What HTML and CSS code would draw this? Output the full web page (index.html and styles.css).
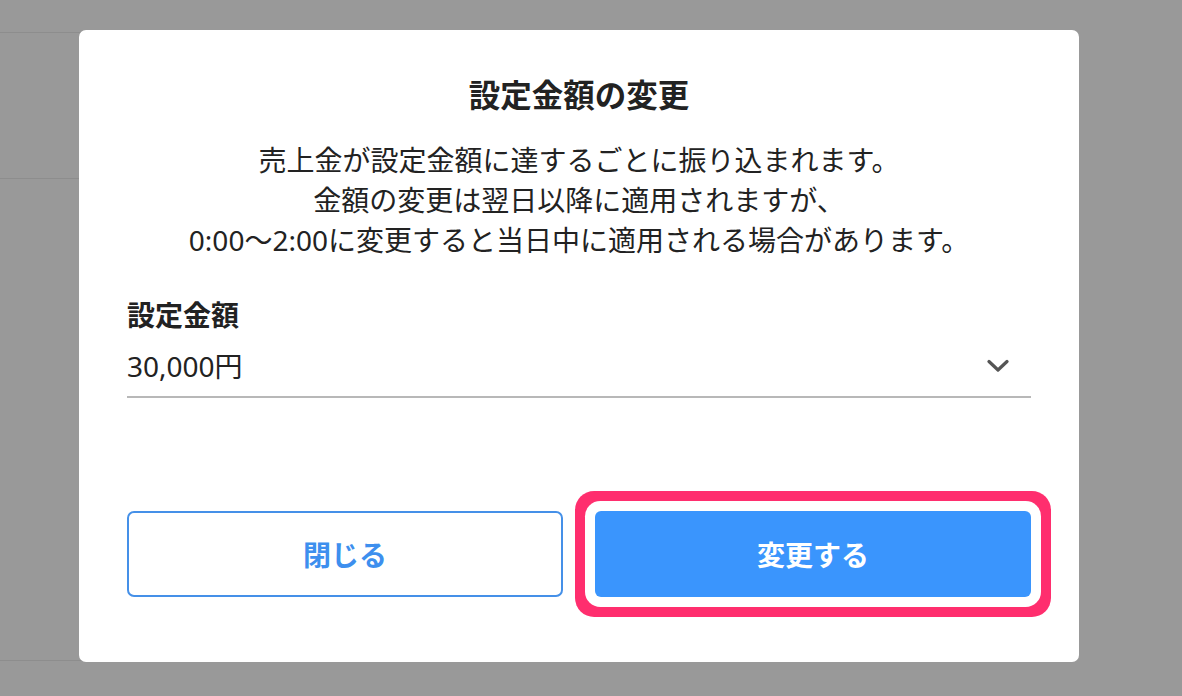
FILE: index.html
```html
<!DOCTYPE html>
<html lang="ja">
<head>
    <meta charset="UTF-8">
    <meta name="viewport" content="width=device-width, initial-scale=1.0">
    <title>設定金額の変更</title>
    <link rel="stylesheet" href="styles.css">
</head>
<body>
    <!-- Page behind the dialog -->
    <div class="backdropPage">
        <div class="pageRow rowHead"></div>
        <div class="pageRow rowMid"></div>
        <div class="pageRow rowLast"></div>
    </div>

    <!-- Dialog -->
    <div class="overlay">
        <div class="modal">
            <h2 class="modalTitle">設定金額の変更</h2>
            <p class="modalText">
                売上金が設定金額に達するごとに振り込まれます。<br>
                金額の変更は翌日以降に適用されますが、<br>
                0:00〜2:00に変更すると当日中に適用される場合があります。
            </p>

            <div class="fieldLabel">設定金額</div>
            <div class="selectBox">
                <span class="selectValue">30,000円</span>
                <svg class="chevron" width="22" height="14" viewBox="0 0 22 14">
                    <path d="M2 2.5 L11 11 L20 2.5" fill="none" stroke="#555" stroke-width="3.2" stroke-linecap="round" stroke-linejoin="round"/>
                </svg>
            </div>

            <div class="buttonRow">
                <button class="btn btnOutline">閉じる</button>
                <button class="btn btnPrimary">変更する</button>
            </div>
        </div>
    </div>
</body>
</html>
```

FILE: styles.css
```css
body {
    margin: 0;
    background-color: #999999;
    font-family: "Noto Sans", "Noto Sans CJK JP", sans-serif;
    color: #222;
    height: 696px;
    overflow: hidden;
}

/* background page rows */
.backdropPage {
    width: 600px;
}

.pageRow {
    border-bottom: 1px solid #8d8d8d;
}

.rowHead {
    height: 32px;
}

.rowMid {
    height: 145px;
}

.rowLast {
    height: 481px;
}

.overlay {
    position: absolute;
    top: 0;
    left: 0;
    right: 0;
    bottom: 0;
}

.modal {
    box-sizing: border-box;
    width: 1000px;
    height: 632px;
    margin: 30px 0 0 79px;
    padding: 0 48px;
    background-color: #fff;
    border-radius: 7px;
}

.modalTitle {
    margin: 0;
    padding-top: 41px;
    font-size: 31.5px;
    line-height: 48px;
    font-weight: 700;
    text-align: center;
    color: #222;
}

.modalText {
    margin: 21px 0 0;
    font-size: 28px;
    line-height: 40px;
    text-align: center;
    color: #222;
}

.fieldLabel {
    margin-top: 35px;
    font-size: 28px;
    line-height: 40px;
    font-weight: 700;
    color: #222;
}

.selectBox {
    display: flex;
    align-items: center;
    justify-content: space-between;
    padding: 11px 22px 10px 0;
    border-bottom: 2px solid #b8b8b8;
}

.selectValue {
    font-size: 28px;
    line-height: 40px;
    color: #222;
}

.chevron {
    display: block;
}

.buttonRow {
    display: grid;
    grid-template-columns: 1fr 1fr;
    gap: 32px;
    margin-top: 113px;
}

.btn {
    height: 86px;
    border-radius: 7px;
    font-family: "Noto Sans", "Noto Sans CJK JP", sans-serif;
    font-size: 28px;
    font-weight: 700;
    cursor: pointer;
}

.btnOutline {
    background-color: #fff;
    border: 2px solid #4590e8;
    color: #3d8fee;
}

.btnPrimary {
    background-color: #3a95fd;
    border: none;
    color: #fff;
    box-shadow: 0 0 0 10px #fff, 0 0 0 20px #ff2e6e;
    border-radius: 6px;
}
```
